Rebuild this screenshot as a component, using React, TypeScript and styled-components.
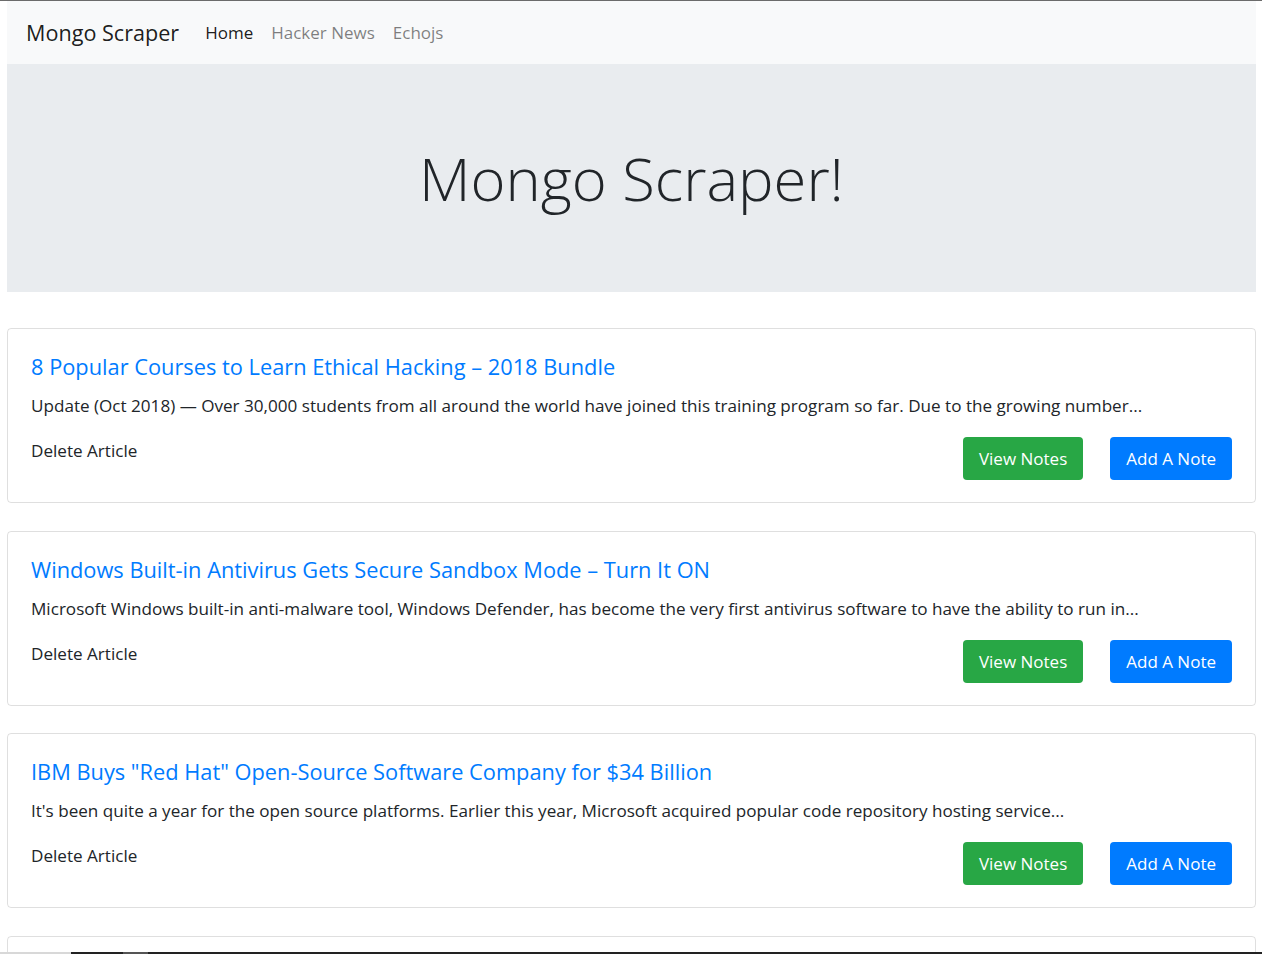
import React from "react";
import styled, { createGlobalStyle } from "styled-components";

const Global = createGlobalStyle`
  html, body { margin: 0; padding: 0; background: #fff; }
  body {
    font-family: "Open Sans", "Noto Sans", sans-serif;
    color: #212529;
    border-top: 1px solid #6b6b6b;
  }
`;

const Page = styled.div`
  padding: 0 6px 0 7px;
`;

const Navbar = styled.nav`
  height: 63px;
  background: #f8f9fa;
  display: flex;
  align-items: center;
  padding: 0 19px;
  gap: 26px;
`;

const Brand = styled.a`
  font-size: 21.6px;
  color: rgba(0, 0, 0, 0.9);
  text-decoration: none;
`;

const NavList = styled.div`
  display: flex;
  gap: 18px;
`;

const NavLink = styled.a<{ $active?: boolean }>`
  font-size: 17px;
  color: ${(p) => (p.$active ? "rgba(0,0,0,0.9)" : "rgba(0,0,0,0.5)")};
  text-decoration: none;
`;

const Jumbotron = styled.header`
  height: 228px;
  background: #e9ecef;
  display: flex;
  align-items: center;
  justify-content: center;
`;

const Display = styled.h1`
  margin: 0;
  font-size: 59.7px;
  font-weight: 300;
  color: #212529;
  line-height: 1.2;
`;

const Articles = styled.main`
  display: flex;
  flex-direction: column;
  gap: 27.5px;
  padding-top: 36px;
`;

const Card = styled.article`
  box-sizing: border-box;
  min-height: 175px;
  border: 1px solid rgba(0, 0, 0, 0.125);
  border-radius: 4px;
  padding: 23px 23px 22px;
`;

const Title = styled.a`
  display: block;
  font-size: 21.8px;
  line-height: 29px;
  color: #007bff;
  text-decoration: none;
`;

const Summary = styled.p`
  margin: 11px 0 0;
  font-size: 17.1px;
  line-height: 27px;
`;

const Row = styled.div`
  display: flex;
  justify-content: space-between;
  align-items: flex-start;
  margin-top: 18px;
`;

const Delete = styled.a`
  font-size: 17.1px;
  line-height: 27px;
  color: #212529;
`;

const Actions = styled.div`
  display: flex;
  gap: 27px;
`;

const Button = styled.button<{ $variant: "success" | "primary" }>`
  height: 43px;
  padding: 0 16px;
  border: none;
  border-radius: 4px;
  font-family: inherit;
  font-size: 17px;
  color: #fff;
  background: ${(p) => (p.$variant === "success" ? "#28a745" : "#007bff")};
  cursor: pointer;
`;

const Taskbar = styled.div`
  position: fixed;
  left: 0;
  right: 0;
  bottom: 0;
  height: 2px;
  background: linear-gradient(
    to right,
    #d8d8d8 0,
    #d8d8d8 71px,
    #222 71px,
    #222 123px,
    #555 123px,
    #555 148px,
    #222 148px
  );
`;

const articles = [
  {
    title: "8 Popular Courses to Learn Ethical Hacking – 2018 Bundle",
    summary:
      "Update (Oct 2018) — Over 30,000 students from all around the world have joined this training program so far. Due to the growing number...",
  },
  {
    title: "Windows Built-in Antivirus Gets Secure Sandbox Mode – Turn It ON",
    summary:
      "Microsoft Windows built-in anti-malware tool, Windows Defender, has become the very first antivirus software to have the ability to run in...",
  },
  {
    title: 'IBM Buys "Red Hat" Open-Source Software Company for $34 Billion',
    summary:
      "It's been quite a year for the open source platforms. Earlier this year, Microsoft acquired popular code repository hosting service...",
  },
  { title: "", summary: "" },
];

export default function App() {
  return (
    <Page>
      <Global />
      <Navbar>
        <Brand href="#">Mongo Scraper</Brand>
        <NavList>
          <NavLink $active href="#">Home</NavLink>
          <NavLink href="#">Hacker News</NavLink>
          <NavLink href="#">Echojs</NavLink>
        </NavList>
      </Navbar>
      <Jumbotron>
        <Display>Mongo Scraper!</Display>
      </Jumbotron>
      <Articles>
        {articles.map((a, i) => (
          <Card key={i}>
            {a.title && (
              <>
                <Title href="#">{a.title}</Title>
                <Summary>{a.summary}</Summary>
                <Row>
                  <Delete>Delete Article</Delete>
                  <Actions>
                    <Button $variant="success">View Notes</Button>
                    <Button $variant="primary">Add A Note</Button>
                  </Actions>
                </Row>
              </>
            )}
          </Card>
        ))}
      </Articles>
      <Taskbar />
    </Page>
  );
}
